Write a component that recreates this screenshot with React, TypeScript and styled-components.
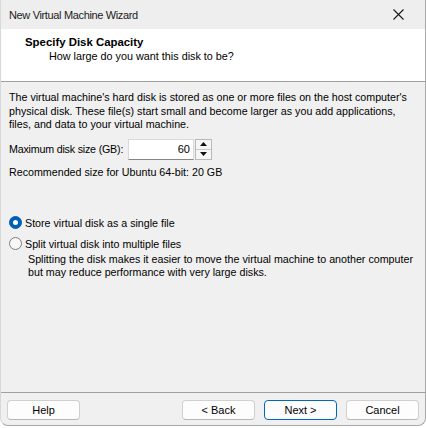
import React from "react";
import styled, { createGlobalStyle } from "styled-components";

const Global = createGlobalStyle`
  html, body { margin: 0; padding: 0; background: #ffffff; }
  body { font-family: "Liberation Sans", Arial, sans-serif; font-size: 10.7px; color: #000; }
  * { box-sizing: border-box; }
`;

const Window = styled.div`
  width: 426px;
  height: 426px;
  display: flex;
  flex-direction: column;
  background: #f0f0f0;
  border: 1px solid #a8a8a8;
  border-top: none;
  border-left-color: #d8d8d8;
  border-radius: 0 0 8px 8px;
  overflow: hidden;
`;

const TitleBar = styled.div`
  height: 29px;
  flex: none;
  display: flex;
  align-items: center;
  justify-content: space-between;
  padding: 0 4px 0 8px;
  background: #eeeeee;
  font-size: 11px;
  letter-spacing: -0.35px;
  color: #1a1a1a;
`;

const CloseButton = styled.div`
  width: 46px;
  height: 29px;
  display: flex;
  align-items: center;
  justify-content: center;
`;

const Header = styled.div`
  flex: none;
  height: 53px;
  background: #ffffff;
  border-bottom: 1px solid #a0a0a0;
  padding: 6px 0 0 24px;
  font-size: 10.8px;
`;

const HeaderTitle = styled.div`
  font-weight: bold;
  font-size: 11.4px;
  line-height: 14px;
`;

const HeaderSub = styled.div`
  padding-left: 24px;
  line-height: 15px;
`;

const Body = styled.div`
  flex: 1;
  padding: 9px 8px 0 8px;
  display: flex;
  flex-direction: column;
`;

const Paragraph = styled.p<{ $indent?: number }>`
  margin: 0;
  line-height: 13.5px;
  white-space: nowrap;
  padding-left: ${(p) => p.$indent ?? 0}px;
`;

const SizeRow = styled.div`
  display: flex;
  align-items: center;
  margin-top: 7px;
  height: 21px;
`;

const SizeLabel = styled.span`
  width: 119px;
  white-space: nowrap;
  letter-spacing: -0.2px;
`;

const NumberBox = styled.div`
  width: 66px;
  height: 21px;
  background: #ffffff;
  border: 1px solid #d9d9d9;
  border-bottom-color: #868686;
  display: flex;
  align-items: center;
  justify-content: flex-end;
  padding-right: 3px;
  font-size: 11px;
`;

const Spinner = styled.div`
  margin-left: 1px;
  width: 17px;
  height: 21px;
  display: flex;
  flex-direction: column;
  border: 1px solid #b8b8b8;
  background: #f6f6f6;
`;

const SpinHalf = styled.div<{ $top?: boolean }>`
  flex: 1;
  display: flex;
  align-items: center;
  justify-content: center;
  border-bottom: ${(p) => (p.$top ? "1px solid #c8c8c8" : "none")};
`;

const Recommended = styled.div`
  margin-top: 5px;
  line-height: 14px;
`;

const RadioGroup = styled.div`
  margin-top: 37px;
  display: flex;
  flex-direction: column;
  gap: 7px;
`;

const RadioRow = styled.label`
  display: flex;
  align-items: center;
  gap: 3px;
  line-height: 14px;
`;

const RadioDot = styled.span<{ $checked?: boolean }>`
  width: 13px;
  height: 13px;
  border-radius: 50%;
  flex: none;
  display: flex;
  align-items: center;
  justify-content: center;
  background: ${(p) => (p.$checked ? "#005fb8" : "#f7f7f7")};
  border: 1px solid ${(p) => (p.$checked ? "#005fb8" : "#7d7d7d")};
  &::after {
    content: "";
    display: ${(p) => (p.$checked ? "block" : "none")};
    width: 5px;
    height: 5px;
    border-radius: 50%;
    background: #ffffff;
  }
`;

const Note = styled.div`
  margin-top: 2px;
`;

const Footer = styled.div`
  flex: none;
  height: 33px;
  border-top: 1px solid #a0a0a0;
  display: flex;
  align-items: flex-start;
  padding: 7px 6px 0 6px;
  gap: 9px;
`;

const Spacer = styled.div`
  flex: 1;
`;

const Button = styled.button<{ $primary?: boolean }>`
  width: 73px;
  height: 20px;
  padding: 0;
  font-family: inherit;
  font-size: 11px;
  color: #000;
  background: #fdfdfd;
  border: 1px solid ${(p) => (p.$primary ? "#0067c0" : "#d0d0d0")};
  border-bottom-color: ${(p) => (p.$primary ? "#0067c0" : "#b8b8b8")};
  border-radius: 4px;
`;

export default function App() {
  return (
    <>
      <Global />
      <Window>
        <TitleBar>
          <span>New Virtual Machine Wizard</span>
          <CloseButton>
            <svg width="11" height="11" viewBox="0 0 11 11">
              <path d="M0.5 0.5 L10.5 10.5 M10.5 0.5 L0.5 10.5" stroke="#1a1a1a" strokeWidth="1.1" />
            </svg>
          </CloseButton>
        </TitleBar>
        <Header>
          <HeaderTitle>Specify Disk Capacity</HeaderTitle>
          <HeaderSub>How large do you want this disk to be?</HeaderSub>
        </Header>
        <Body>
          <Paragraph>
            The virtual machine's hard disk is stored as one or more files on the host computer's
            <br />
            physical disk. These file(s) start small and become larger as you add applications,
            <br />
            files, and data to your virtual machine.
          </Paragraph>
          <SizeRow>
            <SizeLabel>Maximum disk size (GB):</SizeLabel>
            <NumberBox>60</NumberBox>
            <Spinner>
              <SpinHalf $top>
                <svg width="7" height="4" viewBox="0 0 7 4">
                  <path d="M0 4 L3.5 0 L7 4 Z" fill="#111" />
                </svg>
              </SpinHalf>
              <SpinHalf>
                <svg width="7" height="4" viewBox="0 0 7 4">
                  <path d="M0 0 L3.5 4 L7 0 Z" fill="#111" />
                </svg>
              </SpinHalf>
            </Spinner>
          </SizeRow>
          <Recommended>Recommended size for Ubuntu 64-bit: 20 GB</Recommended>
          <RadioGroup>
            <RadioRow>
              <RadioDot $checked />
              Store virtual disk as a single file
            </RadioRow>
            <RadioRow>
              <RadioDot />
              Split virtual disk into multiple files
            </RadioRow>
          </RadioGroup>
          <Note>
            <Paragraph $indent={19}>
              Splitting the disk makes it easier to move the virtual machine to another computer
              <br />
              but may reduce performance with very large disks.
            </Paragraph>
          </Note>
        </Body>
        <Footer>
          <Button>Help</Button>
          <Spacer />
          <Button>&lt; Back</Button>
          <Button $primary>Next &gt;</Button>
          <Button>Cancel</Button>
        </Footer>
      </Window>
    </>
  );
}
